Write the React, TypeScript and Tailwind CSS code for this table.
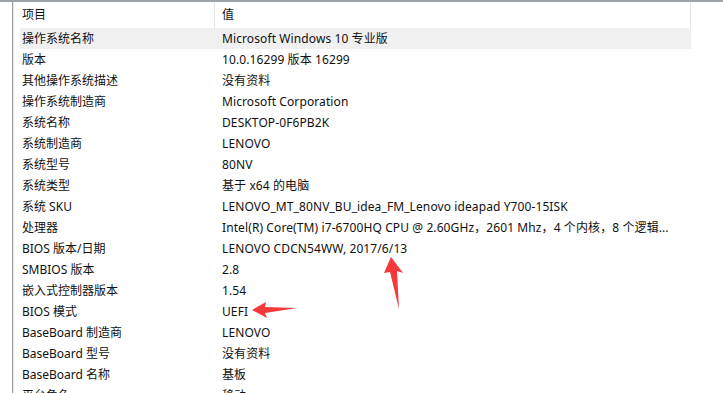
const rows: [string, string][] = [
  ['操作系统名称', 'Microsoft Windows 10 专业版'],
  ['版本', '10.0.16299 版本 16299'],
  ['其他操作系统描述', '没有资料'],
  ['操作系统制造商', 'Microsoft Corporation'],
  ['系统名称', 'DESKTOP-0F6PB2K'],
  ['系统制造商', 'LENOVO'],
  ['系统型号', '80NV'],
  ['系统类型', '基于 x64 的电脑'],
  ['系统 SKU', 'LENOVO_MT_80NV_BU_idea_FM_Lenovo ideapad Y700-15ISK'],
  ['处理器', 'Intel(R) Core(TM) i7-6700HQ CPU @ 2.60GHz，2601 Mhz，4 个内核，8 个逻辑...'],
  ['BIOS 版本/日期', 'LENOVO CDCN54WW, 2017/6/13'],
  ['SMBIOS 版本', '2.8'],
  ['嵌入式控制器版本', '1.54'],
  ['BIOS 模式', 'UEFI'],
  ['BaseBoard 制造商', 'LENOVO'],
  ['BaseBoard 型号', '没有资料'],
  ['BaseBoard 名称', '基板'],
  ['平台角色', '移动'],
];

export default function App() {
  return (
    <div
      className="relative h-[393px] w-[723px] overflow-hidden bg-white text-[12px] text-[#111]"
      style={{ fontFamily: '"Noto Sans", "Noto Sans CJK SC", sans-serif' }}
    >
      <div className="h-[2px] bg-[#9ea3a8]" />
      <div className="flex h-[391px]">
        {/* left gutter and pane border */}
        <div className="w-[12px] shrink-0" />
        <div className="w-px shrink-0 bg-[#a0a0a0]" />
        <div className="w-px shrink-0 bg-[#e6e6e6]" />

        {/* list view */}
        <div className="ml-[6px] flex flex-col">
          <div className="flex h-[26px] shrink-0">
            <div className="flex w-[195px] items-center border-r border-[#e5e5e5] pl-[2px]">项目</div>
            <div className="flex w-[476px] items-center border-r border-[#e5e5e5] pl-[7px]">值</div>
          </div>
          {rows.map(([key, value], i) => (
            <div key={i} className={`flex h-[21px] shrink-0 items-center whitespace-nowrap ${i === 0 ? 'bg-[#f0f0f0]' : ''}`}>
              <div className="w-[195px] overflow-hidden pl-[2px]">{key}</div>
              <div className="w-[476px] overflow-hidden pl-[7px] tracking-[0.1px]">{value}</div>
            </div>
          ))}
        </div>
      </div>

      {/* red annotation arrows */}
      <svg className="pointer-events-none absolute left-0 top-0" width="723" height="393">
        <polygon points="391,257 384,273 390,272 399,309 397,271 403,273" fill="#f5393b" />
        <polygon points="252,310 266,302 265,307 297,308 265,313 267,318" fill="#f5393b" />
      </svg>
    </div>
  );
}
